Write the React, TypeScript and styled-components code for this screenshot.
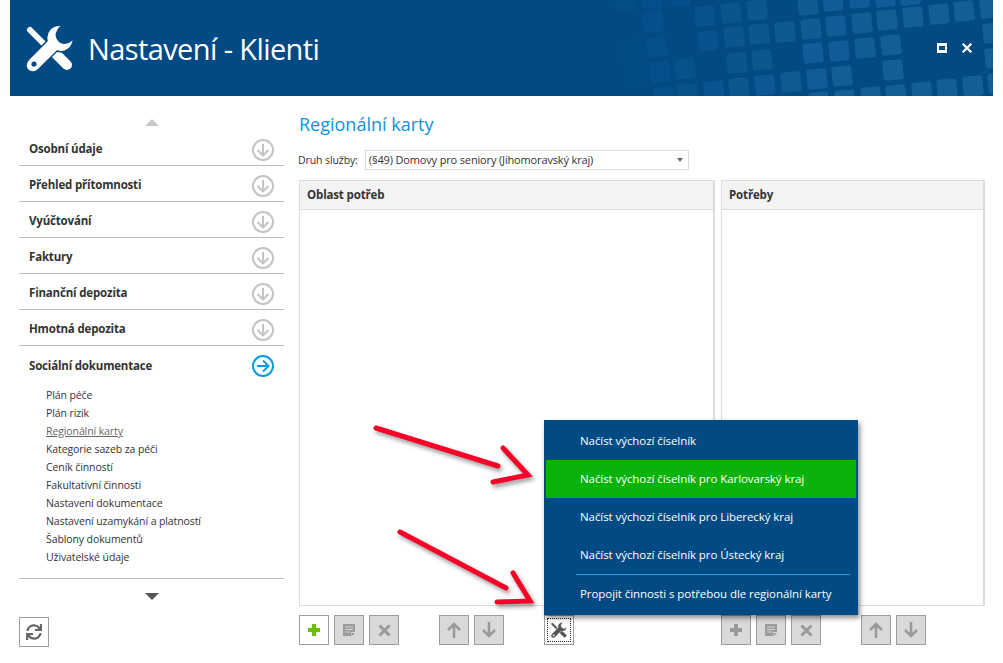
import React from 'react';
import styled, { createGlobalStyle } from 'styled-components';
import { FaSync } from 'react-icons/fa';

const GlobalStyle = createGlobalStyle`
  html, body {
    margin: 0;
    padding: 0;
    background: #fff;
  }
  body {
    font-family: "Open Sans", "Liberation Sans", sans-serif;
    color: #333;
  }
`;

const Page = styled.div`
  position: relative;
  width: 1003px;
  height: 663px;
  padding: 0 10px;
  box-sizing: border-box;
  overflow: hidden;
`;

const Header = styled.header`
  position: relative;
  display: flex;
  align-items: center;
  gap: 14px;
  height: 96px;
  padding-left: 16px;
  background: #014a84;
  overflow: hidden;
`;

const Pattern = styled.svg`
  position: absolute;
  top: 0;
  right: 0;
  width: 400px;
  height: 96px;
`;

const HeaderTitle = styled.h1`
  position: relative;
  margin: 0;
  font-size: 29px;
  font-weight: 400;
  letter-spacing: -0.6px;
  color: #fff;
`;

const WindowButtons = styled.div`
  position: absolute;
  top: 43px;
  right: 21px;
  display: flex;
  gap: 15px;
`;

const MaximizeBox = styled.div`
  width: 10px;
  height: 10px;
  box-sizing: border-box;
  border: 2px solid #fff;
  border-top-width: 3px;
  border-bottom-width: 3px;
`;

const Content = styled.div`
  display: flex;
  padding-left: 9px;
  gap: 15px;
`;

const Sidebar = styled.nav`
  display: flex;
  flex-direction: column;
  width: 265px;
`;

const ScrollZone = styled.div<{ $height: number; $bottom: number }>`
  display: flex;
  justify-content: center;
  align-items: flex-end;
  height: ${(p) => p.$height}px;
  padding-bottom: ${(p) => p.$bottom}px;
  box-sizing: border-box;
`;

const Triangle = styled.div<{ $down?: boolean }>`
  width: 0;
  height: 0;
  border-left: 7px solid transparent;
  border-right: 7px solid transparent;
  ${(p) => (p.$down ? 'border-top: 7px solid #555;' : 'border-bottom: 7px solid #c8c8c8;')}
`;

const SectionRow = styled.div<{ $open?: boolean }>`
  display: flex;
  align-items: center;
  justify-content: space-between;
  height: 36px;
  padding: 2px 10px 0;
  box-sizing: border-box;
  ${(p) => (p.$open ? '' : 'border-bottom: 1px solid #bcbcbc;')}
  font-size: 11.5px;
  font-weight: 700;
  letter-spacing: -0.18px;
  color: #333;
`;

const CircleSvg = styled.svg`
  flex-shrink: 0;
  margin: 2px -1px 0 0;
`;

const SubList = styled.ul`
  margin: 0;
  padding: 4px 0 12px 27px;
  list-style: none;
  border-bottom: 1px solid #bcbcbc;
`;

const SubItem = styled.li<{ $active?: boolean }>`
  height: 18px;
  line-height: 18px;
  font-size: 10.5px;
  letter-spacing: -0.1px;
  color: ${(p) => (p.$active ? '#666' : '#333')};
  text-decoration: ${(p) => (p.$active ? 'underline' : 'none')};
`;

const Main = styled.main`
  position: relative;
  display: flex;
  flex-direction: column;
  width: 686px;
  padding-top: 14px;
`;

const PageTitle = styled.h2`
  margin: 0;
  height: 28px;
  line-height: 28px;
  font-size: 18px;
  font-weight: 400;
  color: #0a94e0;
`;

const FilterRow = styled.div`
  display: flex;
  align-items: center;
  gap: 7px;
  height: 20px;
  margin: 12px 0 10px -1px;
  font-size: 10.5px;
  letter-spacing: -0.1px;
`;

const SelectBox = styled.div`
  position: relative;
  width: 324px;
  height: 20px;
  line-height: 18px;
  padding-left: 3px;
  box-sizing: border-box;
  border: 1px solid #dcdcdc;
  font-size: 11px;
  letter-spacing: -0.15px;

  &::after {
    content: '';
    position: absolute;
    top: 7px;
    right: 5px;
    border-left: 3.5px solid transparent;
    border-right: 3.5px solid transparent;
    border-top: 4px solid #666;
  }
`;

const Columns = styled.div`
  display: flex;
  gap: 6px;
`;

const Column = styled.section<{ $width: number }>`
  width: ${(p) => p.$width}px;
`;

const Panel = styled.div`
  height: 426px;
  box-sizing: border-box;
  border: 1px solid #dcdcdc;
  border-right-width: 2px;
`;

const PanelHeader = styled.div`
  height: 29px;
  line-height: 28px;
  padding-left: 7px;
  box-sizing: border-box;
  background: #f3f3f3;
  border-bottom: 1px solid #dcdcdc;
  font-size: 11.5px;
  font-weight: 700;
  letter-spacing: -0.15px;
`;

const Toolbar = styled.div`
  display: flex;
  gap: 40px;
  margin-top: 9px;
`;

const ToolGroup = styled.div`
  display: flex;
  gap: 5px;
`;

const ToolButton = styled.button<{ $light?: boolean }>`
  position: relative;
  display: flex;
  align-items: center;
  justify-content: center;
  width: 30px;
  height: 30px;
  padding: 0;
  box-sizing: border-box;
  border: 1px solid #9c9c9c;
  background: ${(p) => (p.$light ? '#fff' : '#d9d9d9')};
  color: #9a9a9a;
`;

const FocusRing = styled.span`
  position: absolute;
  inset: 2px;
  border: 1px dotted #222;
`;

const RefreshButton = styled(ToolButton)`
  background: #fff;
  color: #666;
`;

const Popup = styled.div`
  position: absolute;
  top: 324px;
  left: 245px;
  width: 314px;
  height: 195px;
  padding: 2px;
  box-sizing: border-box;
  background: #014a84;
  box-shadow: 2px 3px 5px rgba(0, 0, 0, 0.45);
`;

const PopupItem = styled.div<{ $selected?: boolean }>`
  height: 38px;
  line-height: 37px;
  padding-left: 34px;
  font-size: 11.5px;
  letter-spacing: -0.07px;
  color: #fff;
  background: ${(p) => (p.$selected ? '#08b208' : 'transparent')};
`;

const PopupDivider = styled.div`
  height: 1px;
  margin: 0 6px 0 30px;
  background: #1e9ae0;
`;

const ArrowLayer = styled.svg`
  position: absolute;
  top: 0;
  left: 0;
  width: 1003px;
  height: 663px;
  pointer-events: none;
  filter: drop-shadow(2px 3px 2px rgba(0, 0, 0, 0.4));
`;

const ToolsSvg = styled.svg`
  position: relative;
  flex-shrink: 0;
`;

const MoveSvg = styled.svg<{ $down?: boolean }>`
  ${(p) => (p.$down ? 'transform: rotate(180deg);' : '')}
`;

const patternSquares: [number, number, number][] = [
  [625, 0, 0.02], [652, -2, 0.03], [680, -4, 0.03], [653, 22, 0.03], [657, 47, 0.03], [632, 49, 0.012],
  [660, 72, 0.03], [685, 69, 0.04], [634, 74, 0.012], [663, 97, 0.03], [688, 94, 0.04],
  [705, 16, 0.045], [731, 13, 0.055], [757, 10, 0.06],
  [808, 5, 0.085], [833, 1, 0.09], [859, -2, 0.09], [885, -3, 0.09], [910, -5, 0.09],
  [708, 41, 0.045], [734, 37, 0.055], [759, 34, 0.065], [785, 32, 0.075], [811, 29, 0.085], [836, 26, 0.09],
  [862, 23, 0.095], [887, 20, 0.1], [913, 17, 0.1], [939, 14, 0.1], [964, 11, 0.1], [990, 8, 0.1],
  [813, 53, 0.09], [839, 51, 0.09], [865, 48, 0.095], [891, 45, 0.1],
  [737, 63, 0.055], [762, 60, 0.065], [993, 33, 0.1], [995, 58, 0.1], [998, 83, 0.1],
  [893, 70, 0.1], [842, 76, 0.1], [817, 79, 0.09], [791, 82, 0.08], [765, 85, 0.07],
  [739, 88, 0.06], [714, 91, 0.05],
  [922, 92, 0.1], [947, 89, 0.1], [973, 86, 0.1], [896, 95, 0.1], [871, 97, 0.1], [845, 100, 0.1], [819, 102, 0.09],
];

const ToolsIcon: React.FC<{ size: number; color: string; gapColor: string }> = ({ size, color, gapColor }) => (
  <ToolsSvg width={size} height={size} viewBox="0 0 48 48">
    <path d="M4 6 L20 22" stroke={color} strokeWidth="6" strokeLinecap="round" fill="none" />
    <path d="M29 29 L41 41" stroke={color} strokeWidth="10" strokeLinecap="round" fill="none" />
    <path
      d="M36 1.5 C26 0 19 8 21 17 L3 35 C-1 39 -1 44 2.5 46.5 C6 49 10 48 13 45 L31 27 C39 30 47 24 47.5 14.5 C45 17 41 20 37 19 C32 18 29 12 31 8 C32 5 34 3 36 1.5 Z"
      fill={color}
      stroke={gapColor}
      strokeWidth="1.5"
    />
    <circle cx="8" cy="40" r="2.6" fill={gapColor} />
  </ToolsSvg>
);

const CircleArrow: React.FC<{ active?: boolean }> = ({ active }) => (
  <CircleSvg width="24" height="24" viewBox="0 0 24 24">
    <circle cx="12" cy="12" r="10" fill="none" stroke={active ? '#0a9ae6' : '#c4c4c4'} strokeWidth="2" />
    {active ? (
      <path d="M6 12 H17 M12 6.5 L17.5 12 L12 17.5" fill="none" stroke="#0a9ae6" strokeWidth="2" />
    ) : (
      <path d="M12 6 V17 M6.5 12 L12 17.5 L17.5 12" fill="none" stroke="#c4c4c4" strokeWidth="2" />
    )}
  </CircleSvg>
);

const PlusIcon: React.FC<{ color: string }> = ({ color }) => (
  <svg width="12" height="12" viewBox="0 0 12 12">
    <path d="M4 0 H8 V4 H12 V8 H8 V12 H4 V8 H0 V4 H4 Z" fill={color} />
  </svg>
);

const NoteIcon = () => (
  <svg width="13" height="13" viewBox="0 0 13 13">
    <path d="M0 0 H12 V8 H8 V12 H0 Z M8.5 9 H12 L8.5 12.5 Z" fill="#9a9a9a" />
    <path d="M2 3 H10 M2 5.5 H10 M2 8 H7" stroke="#d9d9d9" strokeWidth="1" />
  </svg>
);

const CrossIcon = () => (
  <svg width="13" height="13" viewBox="0 0 13 13">
    <path d="M1.5 1.5 L11.5 11.5 M11.5 1.5 L1.5 11.5" stroke="#9a9a9a" strokeWidth="3" />
  </svg>
);

const MoveIcon: React.FC<{ down?: boolean }> = ({ down }) => (
  <MoveSvg $down={down} width="14" height="16" viewBox="0 0 14 16">
    <path d="M7 16 V2 M1 8 L7 2 L13 8" fill="none" stroke="#9a9a9a" strokeWidth="2.6" />
  </MoveSvg>
);

const sections = ['Osobní údaje', 'Přehled přítomnosti', 'Vyúčtování', 'Faktury', 'Finanční depozita', 'Hmotná depozita'];

const subItems = [
  'Plán péče',
  'Plán rizik',
  'Regionální karty',
  'Kategorie sazeb za péči',
  'Ceník činností',
  'Fakultativní činnosti',
  'Nastavení dokumentace',
  'Nastavení uzamykání a platností',
  'Šablony dokumentů',
  'Uživatelské údaje',
];

const EditGroup: React.FC<{ addActive?: boolean }> = ({ addActive }) => (
  <ToolGroup>
    <ToolButton $light={addActive}>
      <PlusIcon color={addActive ? '#6cbf00' : '#9a9a9a'} />
    </ToolButton>
    <ToolButton>
      <NoteIcon />
    </ToolButton>
    <ToolButton>
      <CrossIcon />
    </ToolButton>
  </ToolGroup>
);

const MoveGroup = () => (
  <ToolGroup>
    <ToolButton>
      <MoveIcon />
    </ToolButton>
    <ToolButton>
      <MoveIcon down />
    </ToolButton>
  </ToolGroup>
);

const App: React.FC = () => (
  <Page>
    <GlobalStyle />
    <Header>
      <ToolsIcon size={48} color="#fff" gapColor="#014a84" />
      <Pattern viewBox="593 0 400 96">
        {patternSquares.map(([x, y, o]) => (
          <rect
            key={`${x}-${y}`}
            x={x - 10}
            y={y - 10}
            width="20"
            height="20"
            rx="2.5"
            fill="#58b4e8"
            opacity={o * 2}
            transform={`rotate(-6 ${x} ${y})`}
          />
        ))}
      </Pattern>
      <HeaderTitle>Nastavení - Klienti</HeaderTitle>
      <WindowButtons>
        <MaximizeBox />
        <svg width="10" height="10" viewBox="0 0 10 10">
          <path d="M0.7 0.7 L9.3 9.3 M9.3 0.7 L0.7 9.3" stroke="#fff" strokeWidth="2.2" />
        </svg>
      </WindowButtons>
    </Header>
    <Content>
      <Sidebar>
        <ScrollZone $height={34} $bottom={4}>
          <Triangle />
        </ScrollZone>
        {sections.map((name) => (
          <SectionRow key={name}>
            {name}
            <CircleArrow />
          </SectionRow>
        ))}
        <SectionRow $open>
          Sociální dokumentace
          <CircleArrow active />
        </SectionRow>
        <SubList>
          {subItems.map((item) => (
            <SubItem key={item} $active={item === 'Regionální karty'}>
              {item}
            </SubItem>
          ))}
        </SubList>
        <ScrollZone $height={38} $bottom={17}>
          <Triangle $down />
        </ScrollZone>
        <RefreshButton>
          <FaSync size={16} />
        </RefreshButton>
      </Sidebar>
      <Main>
        <PageTitle>Regionální karty</PageTitle>
        <FilterRow>
          Druh služby:
          <SelectBox>(§49) Domovy pro seniory (Jihomoravský kraj)</SelectBox>
        </FilterRow>
        <Columns>
          <Column $width={416}>
            <Panel>
              <PanelHeader>Oblast potřeb</PanelHeader>
            </Panel>
            <Toolbar>
              <EditGroup addActive />
              <MoveGroup />
              <ToolGroup>
                <ToolButton $light>
                  <ToolsIcon size={16} color="#555" gapColor="#fff" />
                  <FocusRing />
                </ToolButton>
              </ToolGroup>
            </Toolbar>
          </Column>
          <Column $width={264}>
            <Panel>
              <PanelHeader>Potřeby</PanelHeader>
            </Panel>
            <Toolbar>
              <EditGroup />
              <MoveGroup />
            </Toolbar>
          </Column>
        </Columns>
        <Popup>
          <PopupItem>Načíst výchozí číselník</PopupItem>
          <PopupItem $selected>Načíst výchozí číselník pro Karlovarský kraj</PopupItem>
          <PopupItem>Načíst výchozí číselník pro Liberecký kraj</PopupItem>
          <PopupItem>Načíst výchozí číselník pro Ústecký kraj</PopupItem>
          <PopupDivider />
          <PopupItem>Propojit činnosti s potřebou dle regionální karty</PopupItem>
        </Popup>
      </Main>
    </Content>
    <ArrowLayer viewBox="0 0 1003 663">
      <g fill="none" stroke="#fa0028" strokeWidth="5" strokeLinecap="round" strokeLinejoin="miter" strokeMiterlimit="6">
        <path d="M376 428 L498 466" />
        <path d="M503 448 L528 475 L493 482" />
        <path d="M400 532 L506 588" />
        <path d="M513 573 L530 601 L497 602" />
      </g>
    </ArrowLayer>
  </Page>
);

export default App;
